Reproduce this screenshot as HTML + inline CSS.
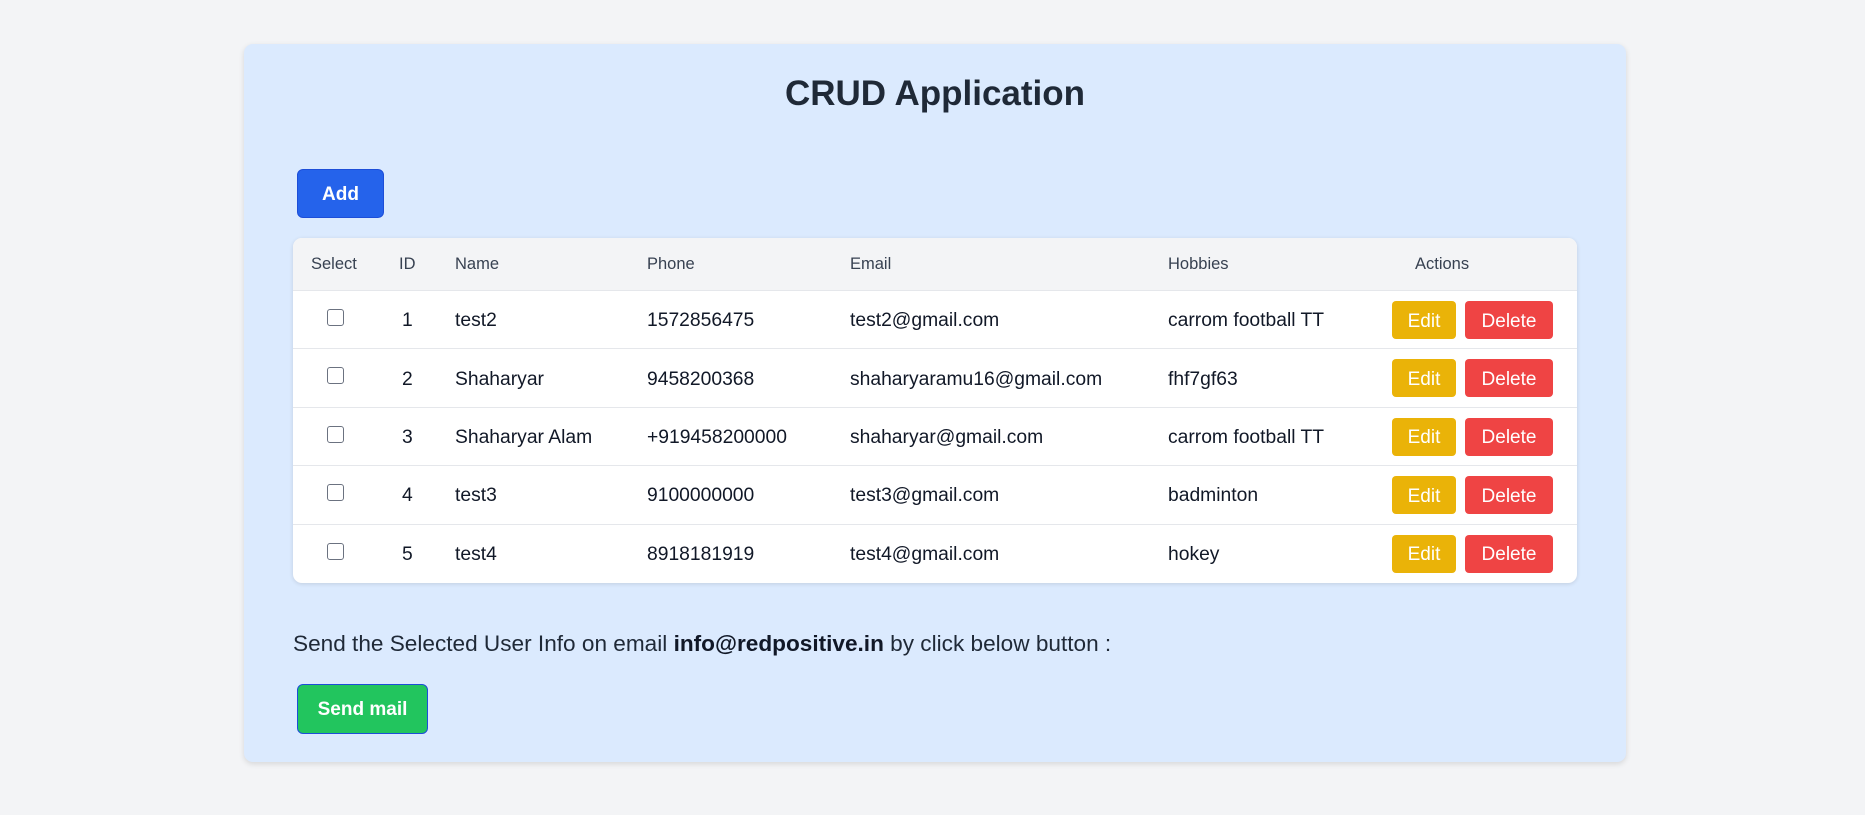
<!DOCTYPE html>
<html><head><style>
*{box-sizing:border-box;margin:0;padding:0}
body{width:1865px;height:815px;background:#f3f4f6;font-family:"Liberation Sans",sans-serif;position:relative;overflow:hidden;color:#111827}
.card{position:absolute;left:244px;top:44px;width:1382px;height:718px;background:#dbeafe;border-radius:9px;box-shadow:0 2px 6px rgba(0,0,0,.12)}
h1{position:absolute;left:244px;width:1382px;top:74px;text-align:center;font-size:35px;font-weight:bold;color:#1f2937}
.btn{position:absolute;color:#fff;font-weight:bold;display:flex;align-items:center;justify-content:center;border-radius:6px;padding-top:2px}
.tbl{position:absolute;left:293px;top:238px;width:1284px;height:345px;background:#fff;border-radius:9px;box-shadow:0 1px 4px rgba(0,0,0,.12);overflow:hidden}
.hd{position:absolute;left:0;top:0;width:1284px;height:53px;background:#f3f4f6;border-bottom:1px solid #e5e7eb}
.row{position:absolute;left:0;width:1284px;height:58.4px;border-bottom:1px solid #e5e7eb}
.c{position:absolute;top:0;height:100%;display:flex;align-items:center;white-space:nowrap}
.hd .c{font-size:16.5px;color:#374151;padding-top:1px}
.row .c{font-size:19.3px;color:#111827;padding-top:3px}
.cb{position:absolute;left:34px;top:18px;width:17px;height:17px;border:1.5px solid #6b7280;border-radius:3px;background:#fff}
.e,.d{position:absolute;top:10px;height:38px;border-radius:4px;color:#fff;font-size:19px;display:flex;align-items:center;justify-content:center;padding-top:3px}
.e{left:1099px;width:64px;background:#eab308}
.d{left:1172px;width:88px;background:#ef4444}
</style></head><body>
<div class="card"></div>
<h1>CRUD Application</h1>
<div class="btn" style="left:297px;top:169px;width:87px;height:49px;background:#2563eb;border:1px solid #1d4ed8;font-size:19px">Add</div>
<div class="tbl">
<div class="hd">
<div class="c" style="left:18px">Select</div>
<div class="c" style="left:106px">ID</div>
<div class="c" style="left:162px">Name</div>
<div class="c" style="left:354px">Phone</div>
<div class="c" style="left:557px">Email</div>
<div class="c" style="left:875px">Hobbies</div>
<div class="c" style="left:1122px">Actions</div>
</div>
<div class="row" style="top:53px"><div class="cb"></div><div class="c" style="left:109px">1</div><div class="c" style="left:162px">test2</div><div class="c" style="left:354px">1572856475</div><div class="c" style="left:557px">test2@gmail.com</div><div class="c" style="left:875px">carrom football TT</div><div class="e">Edit</div><div class="d">Delete</div></div>
<div class="row" style="top:111.4px"><div class="cb"></div><div class="c" style="left:109px">2</div><div class="c" style="left:162px">Shaharyar</div><div class="c" style="left:354px">9458200368</div><div class="c" style="left:557px">shaharyaramu16@gmail.com</div><div class="c" style="left:875px">fhf7gf63</div><div class="e">Edit</div><div class="d">Delete</div></div>
<div class="row" style="top:169.8px"><div class="cb"></div><div class="c" style="left:109px">3</div><div class="c" style="left:162px">Shaharyar Alam</div><div class="c" style="left:354px">+919458200000</div><div class="c" style="left:557px">shaharyar@gmail.com</div><div class="c" style="left:875px">carrom football TT</div><div class="e">Edit</div><div class="d">Delete</div></div>
<div class="row" style="top:228.2px"><div class="cb"></div><div class="c" style="left:109px">4</div><div class="c" style="left:162px">test3</div><div class="c" style="left:354px">9100000000</div><div class="c" style="left:557px">test3@gmail.com</div><div class="c" style="left:875px">badminton</div><div class="e">Edit</div><div class="d">Delete</div></div>
<div class="row" style="top:286.6px;border-bottom:none"><div class="cb"></div><div class="c" style="left:109px">5</div><div class="c" style="left:162px">test4</div><div class="c" style="left:354px">8918181919</div><div class="c" style="left:557px">test4@gmail.com</div><div class="c" style="left:875px">hokey</div><div class="e">Edit</div><div class="d">Delete</div></div>
</div>
<div style="position:absolute;left:293px;top:631px;font-size:22.6px;color:#1f2937;white-space:nowrap">Send the Selected User Info on email <b style="color:#111827">info@redpositive.in</b> by click below button :</div>
<div class="btn" style="left:297px;top:684px;width:131px;height:50px;background:#22c55e;border:1px solid #1d4ed8;font-size:19px">Send mail</div>
</body></html>
